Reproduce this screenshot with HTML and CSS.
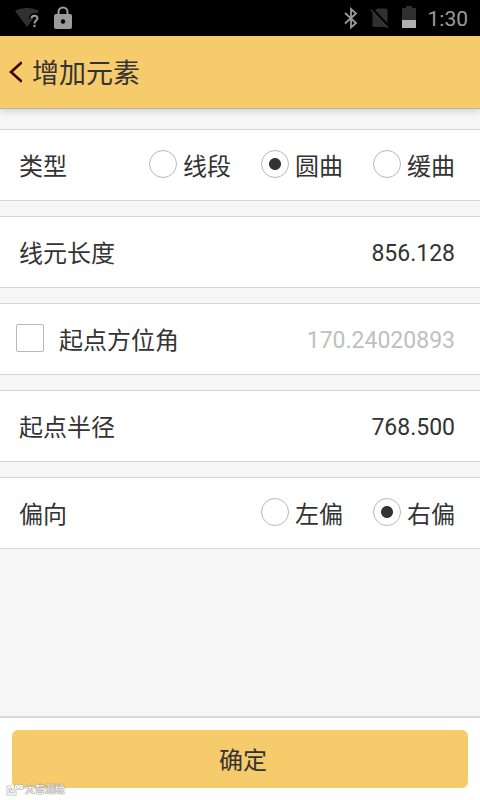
FILE: index.html
```html
<!DOCTYPE html>
<html lang="zh-CN">
<head>
<meta charset="utf-8">
<meta name="viewport" content="width=device-width, initial-scale=1">
<title>增加元素</title>
<link rel="stylesheet" href="styles.css">
</head>
<body>
<div class="status">
  <div class="status-group">
    <svg width="28" height="24" viewBox="0 0 28 24" aria-hidden="true"><path d="M1 5C7 1 19 1 25 5L13 21Z" fill="#303030"/><path d="M17.500 13C17.500 8.500 23.500 8.500 23.500 12C23.500 14.500 20.500 14.500 20.500 18" fill="none" stroke="#000" stroke-width="5"/><path d="M17.500 12.500C17.500 8.800 23.500 8.800 23.500 12C23.500 14.500 20.500 14.500 20.500 17.500" fill="none" stroke="#a0a0a0" stroke-width="2"/><path d="M19.500 18.800h2v2.300h-2z" fill="#a0a0a0"/></svg>
    <svg width="18" height="24" viewBox="0 0 18 24" aria-hidden="true"><path d="M4.500 10V6a4.500 4.500 0 0 1 9 0v4" fill="none" stroke="#9c9c9c" stroke-width="2"/><rect y="8" width="18" height="15" rx="2" fill="#9c9c9c"/><circle cx="9" cy="15.500" r="2.200" fill="#000"/></svg>
  </div>
  <div class="status-group">
    <svg width="14" height="24" viewBox="0 0 14 24" aria-hidden="true"><path d="M1 7l11 10-5 4.500V3l5 4.500L1 17.500" fill="none" stroke="#9c9c9c" stroke-width="1.800"/></svg>
    <svg width="20" height="24" viewBox="0 0 20 24" aria-hidden="true"><path d="M7 2.500h9a1.500 1.500 0 0 1 1.500 1.500v17H4a1.500 1.500 0 0 1-1.500-1.500V7Z" fill="#303030"/><path d="M2 3l18 19" stroke="#000" stroke-width="3"/><path d="M1 4l17 18" stroke="#3a3a3a" stroke-width="1.500"/></svg>
    <svg width="14" height="24" viewBox="0 0 14 24" aria-hidden="true"><path d="M4 0h6v2h4v12H0V2h4z" fill="#303030"/><path d="M0 14h14v8H0z" fill="#b0b0b0"/></svg>
    <span class="clock">1:30</span>
  </div>
</div>
<header class="bar">
  <button class="back" type="button" aria-label="返回"><svg width="14" height="22" viewBox="0 0 14 22" aria-hidden="true"><path d="M13 2L3 11l10 9" fill="none" stroke="#3b0505" stroke-width="2.600" stroke-linecap="round"/></svg></button>
  <h1 class="title">增加元素</h1>
</header>
<form class="form">
  <div class="row" role="radiogroup" aria-labelledby="type-label">
    <span id="type-label">类型</span>
    <span class="options">
      <label class="option"><input type="radio" name="type">线段</label>
      <label class="option"><input type="radio" name="type" checked>圆曲</label>
      <label class="option"><input type="radio" name="type">缓曲</label>
    </span>
  </div>
  <div class="row">
    <label for="length">线元长度</label>
    <input class="value" id="length" type="text" value="856.128">
  </div>
  <div class="row row-check">
    <label class="check"><input type="checkbox">起点方位角</label>
    <input class="value" type="text" value="170.24020893" aria-label="起点方位角" disabled>
  </div>
  <div class="row">
    <label for="radius">起点半径</label>
    <input class="value" id="radius" type="text" value="768.500">
  </div>
  <div class="row" role="radiogroup" aria-labelledby="side-label">
    <span id="side-label">偏向</span>
    <span class="options">
      <label class="option"><input type="radio" name="side">左偏</label>
      <label class="option"><input type="radio" name="side" checked>右偏</label>
    </span>
  </div>
</form>
<footer class="footer">
  <button class="confirm" type="button">确定</button>
  <div class="mark">
    <svg width="18" height="12" viewBox="0 0 18 12" aria-hidden="true"><g fill="none" stroke="#bbb" stroke-width="3"><path d="M6 3H2v7h7V7M4 5l2 3 4-4"/><circle cx="11" cy="3" r="1.500"/><circle cx="15" cy="3" r="1.500"/></g><g fill="none" stroke="#fff" stroke-width="1.300"><path d="M6 3H2v7h7V7M4 5l2 3 4-4"/><circle cx="11" cy="3" r="1.500"/><circle cx="15" cy="3" r="1.500"/></g></svg>
    <span>大智测绘</span>
  </div>
</footer>
</body>
</html>
```
FILE: styles.css
```css
* {
  box-sizing: border-box;
}

body {
  margin: 0;
  min-height: 100vh;
  display: flex;
  flex-direction: column;
  background: #f6f6f6;
  color: #333;
  font-family: Roboto, "Noto Sans CJK SC", sans-serif;
  font-size: 24px;
  line-height: 36px;
}

button,
input {
  font: inherit;
  color: inherit;
  margin: 0;
}

svg {
  display: block;
  flex: none;
}

.status {
  height: 36px;
  padding: 0 12px 0 14px;
  display: flex;
  align-items: center;
  justify-content: space-between;
  background: #000;
}

.status-group {
  display: flex;
  align-items: center;
  gap: 12px;
}

.clock {
  padding-top: 2px;
  color: #9c9c9c;
  font-size: 21px;
}

.bar {
  height: 73px;
  padding: 0 8px;
  display: flex;
  align-items: center;
  gap: 10px;
  background: #f5cb6c;
  border-bottom: 1px solid #b9b4a8;
  box-shadow: 0 1px 8px rgba(0, 0, 0, 0.2);
}

.back {
  padding: 0;
  border: 0;
  background: none;
}

.title {
  margin: 0;
  padding-top: 3px;
  font-size: 27px;
  font-weight: 400;
}

.form {
  flex: 1;
  padding: 20px 0;
  display: flex;
  flex-direction: column;
  gap: 15px;
}

.row {
  height: 72px;
  padding: 3px 25px 0 19px;
  display: flex;
  align-items: center;
  justify-content: space-between;
  background: #fff;
  border: solid #d6d6d6;
  border-width: 1px 0;
}

.row-check {
  padding-left: 16px;
}

.options {
  display: flex;
  gap: 30px;
}

.option,
.check {
  display: flex;
  align-items: center;
  gap: 6px;
}

.check {
  gap: 15px;
}

input[type="radio"],
input[type="checkbox"] {
  appearance: none;
  flex: none;
  width: 28px;
  height: 28px;
  margin-bottom: 5px;
  border: 1px solid #b8b8b8;
  border-radius: 50%;
  background: #fff;
}

input[type="checkbox"] {
  border-radius: 2px;
}

input[type="radio"]:checked {
  background: radial-gradient(circle, #333 0 5.500px, #fff 6.500px);
}

input[type="checkbox"]:checked {
  background: #333;
}

.value {
  flex: 1;
  min-width: 0;
  padding: 0;
  border: 0;
  background: none;
  font-size: 23px;
  text-align: right;
}

.value:disabled {
  color: #c0c0c0;
}

.footer {
  position: relative;
  padding: 12px;
  background: #fff;
  border-top: 2px solid #d8d8d8;
}

.confirm {
  display: block;
  width: 100%;
  height: 58px;
  padding: 3px 0 0 6px;
  border: 0;
  border-radius: 6px;
  background: #f5cb6c;
}

.mark {
  position: absolute;
  left: 6px;
  bottom: 4px;
  display: flex;
  align-items: center;
  gap: 1px;
  color: #fff;
  font-size: 10px;
  line-height: 12px;
  text-shadow: 0 0 1px #888, 0 0 1px #888, 0 0 2px #888;
}
```
